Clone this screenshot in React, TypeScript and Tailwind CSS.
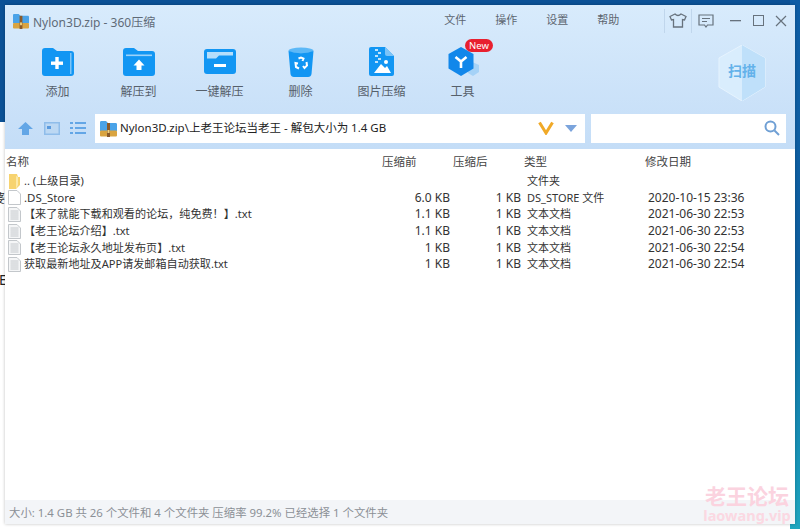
const font = "[font-family:'Noto_Sans','Noto_Sans_CJK_SC',sans-serif]";

const rows = [
  { name: ".. (上级目录)", before: "", after: "", type: "文件夹", date: "", icon: "folder" },
  { name: ".DS_Store", before: "6.0 KB", after: "1 KB", type: "DS_STORE 文件", date: "2020-10-15 23:36", icon: "blank" },
  { name: "【来了就能下载和观看的论坛，纯免费！】.txt", before: "1.1 KB", after: "1 KB", type: "文本文档", date: "2021-06-30 22:53", icon: "text" },
  { name: "【老王论坛介绍】.txt", before: "1.1 KB", after: "1 KB", type: "文本文档", date: "2021-06-30 22:53", icon: "text" },
  { name: "【老王论坛永久地址发布页】.txt", before: "1 KB", after: "1 KB", type: "文本文档", date: "2021-06-30 22:54", icon: "text" },
  { name: "获取最新地址及APP请发邮箱自动获取.txt", before: "1 KB", after: "1 KB", type: "文本文档", date: "2021-06-30 22:54", icon: "text" },
];

function ZipIcon({ size }: { size: number }) {
  return (
    <svg width={size} height={size} viewBox="0 0 17 17" className="shrink-0">
      <path d="M0 2.5 C0 1.5 .5 1 1.5 1 H6 L8 3 H15.5 C16.5 3 17 3.5 17 4.5 V11 H0 Z" fill="#4aa3e8" />
      <rect x="0" y="10.5" width="17" height="6" rx="1" fill="#d9a441" />
      <rect x="7" y="3" width="3" height="14" fill="#8a5a2b" />
      <rect x="7.5" y="10" width="2" height="3" fill="#f1d27c" />
    </svg>
  );
}

function ToolIcon({ kind }: { kind: string }) {
  if (kind === "add")
    return (
      <svg width="32" height="28" viewBox="0 0 32 28">
        <path d="M0 3 Q0 0 3 0 H11 L15 3 H29 Q32 3 32 6 V25 Q32 28 29 28 H3 Q0 28 0 25 Z" fill="#1296f3" />
        <rect x="28" y="5" width="1.5" height="21" fill="#7cc4f8" />
        <rect x="9" y="13.5" width="12" height="3.4" fill="#fff" />
        <rect x="13.3" y="9" width="3.4" height="12" fill="#fff" />
      </svg>
    );
  if (kind === "to")
    return (
      <svg width="32" height="28" viewBox="0 0 32 28">
        <path d="M0 3 Q0 0 3 0 H11 L15 3 H29 Q32 3 32 6 V25 Q32 28 29 28 H3 Q0 28 0 25 Z" fill="#1296f3" />
        <rect x="3" y="6.5" width="26" height="1.6" fill="#9bd2fa" />
        <path d="M16 11.5 L21.5 17.5 H18.5 V22 H13.5 V17.5 H10.5 Z" fill="#fff" />
      </svg>
    );
  if (kind === "one")
    return (
      <svg width="32" height="25" viewBox="0 0 32 25">
        <rect width="32" height="25" rx="3" fill="#1296f3" />
        <path d="M3 3 H29 V6.5 H15 L12 9.5 H3 Z" fill="#b5defb" />
        <rect x="10" y="15" width="12" height="3" fill="#fff" />
      </svg>
    );
  if (kind === "trash")
    return (
      <svg width="26" height="30" viewBox="0 0 26 30">
        <ellipse cx="13" cy="3.5" rx="12.5" ry="3" fill="#5cb8f7" />
        <path d="M.5 4 Q13 8.5 25.5 4 L23.5 27 Q23 30 20 30 H6 Q3 30 2.500 27 Z" fill="#1296f3" />
        {/* recycle mark, three arrows chasing round */}
        <path d="M10.500 11.500 L13 10.500 L15.500 11.500 L14.500 14 M18.500 15 L19 18.500 L16.500 21 L15 19 M11 21.500 L8 20 L7.500 16 L10 16.500" fill="none" stroke="#fff" strokeWidth="2" />
      </svg>
    );
  if (kind === "image")
    return (
      <svg width="25" height="29" viewBox="0 0 25 29">
        <path d="M2 0 H16 L25 9 V27 Q25 29 23 29 H2 Q0 29 0 27 V2 Q0 0 2 0 Z" fill="#1296f3" />
        <path d="M16 0 L25 9 H18 Q16 9 16 7 Z" fill="#7cc4f8" />
        <path d="M6 2h3v2h-3zM9 5h3v2h-3zM6 8h3v2h-3zM9 11h3v2h-3zM6 14h3v2h-3z" fill="#bfe2fb" />
        <path d="M5 26 L12 17 L16 21 L18 19 L22 26 Z" fill="#fff" />
        <circle cx="17" cy="15" r="2" fill="#fff" />
      </svg>
    );
  return (
    <svg width="32" height="30" viewBox="0 0 32 30" className="ml-[3px]">
      <path d="M22 14 L31 18 V25 L25 29 L20 26 Z" fill="#a5d2f7" />
      <path d="M13 0 L25.500 7 V21.500 L13 29 L.5 21.500 V7 Z" fill="#1287ea" />
      <path d="M7.500 10 L13 14.500 L18.500 10 M13 14.500 V21" fill="none" stroke="#fff" strokeWidth="2.600" />
    </svg>
  );
}

const tools = [
  { kind: "add", label: "添加" },
  { kind: "to", label: "解压到" },
  { kind: "one", label: "一键解压" },
  { kind: "trash", label: "删除" },
  { kind: "image", label: "图片压缩" },
  { kind: "tool", label: "工具" },
];

function FileIcon({ kind }: { kind: string }) {
  if (kind === "folder")
    return (
      <svg width="11" height="15" viewBox="0 0 11 15" className="ml-[4px] mr-[6px] shrink-0">
        <path d="M0 0 H8 L9 3 H11 V11 L7 15 H0 Z" fill="#f7d36f" />
        <path d="M7 2 L9 3 V11 L7 15 Z" fill="#fce9a8" />
      </svg>
    );
  return (
    <svg width="13" height="15" viewBox="0 0 13 15" className="ml-[3px] mr-[5px] shrink-0">
      <path d="M.5 .5 H9 L12.500 4 V14.500 H.5 Z" fill={kind === "blank" ? "#fff" : "#f5f6f7"} stroke="#c3c7cb" />
      {kind === "text" && <path d="M2.500 4h8M2.500 6h8M2.500 8h8M2.500 10h8M2.500 12h8" stroke="#c4c8cc" />}
    </svg>
  );
}

export default function App() {
  return (
    <div className={`relative h-[529px] w-[800px] overflow-hidden bg-white p-[5px] ${font}`}>
      {/* desktop behind the window */}
      <div className="absolute inset-x-0 top-0 h-[122px] bg-[#0b5196]" />
      <div className="absolute bottom-0 right-0 top-0 w-[10px] bg-gradient-to-b from-[#0d5da6] via-[#0f5f9e] to-[#1fa6bf]" />
      <div className="absolute left-0 top-[192px] w-[5px] overflow-hidden text-[12px] leading-[14px] text-[#333]">
        <span className="ml-[-7px]">婆</span>
      </div>
      <div className="absolute left-0 top-[272px] w-[5px] overflow-hidden text-[14px] leading-[16px] text-[#222]">
        <span className="ml-[-1px]">E</span>
      </div>

      <div className="relative flex h-[519px] w-[790px] flex-col bg-white shadow-[0_0_3px_rgba(0,0,0,0.25)]">
        <div className="flex h-[144px] flex-col bg-gradient-to-b from-[#d8ebfc] to-[#c4ddf7]">
          <div className="flex h-[32px] items-center text-[#5d6670]">
            <div className="ml-[8px] mr-[4px]">
              <ZipIcon size={16} />
            </div>
            <span className="mt-[4px] whitespace-nowrap text-[12px] text-[#5f6b78]">Nylon3D.zip - 360压缩</span>
            <div className="ml-[289px] flex w-[212px] shrink-0 items-center gap-[29px] pb-[1px] text-[11px]">
              <span>文件</span>
              <span>操作</span>
              <span>设置</span>
              <span>帮助</span>
            </div>
            <div className="ml-[8px] flex items-center pb-[1px]">
              <div className="flex h-[24px] w-[28px] items-center justify-center border-x border-[#c0d6ec]">
                <svg width="18" height="15" viewBox="0 0 18 15" fill="none" stroke="#67727d" strokeWidth="1.300">
                  <path d="M6 1 L1 3.500 L2.500 7 L4.500 6.500 V14 H13.500 V6.500 L15.500 7 L17 3.500 L12 1 Q9 4 6 1 Z" />
                </svg>
              </div>
              <div className="flex h-[24px] w-[27px] items-center justify-center">
                <svg width="16" height="14" viewBox="0 0 16 14" fill="none" stroke="#67727d" strokeWidth="1.200">
                  <path d="M1 1 H15 V11 H9.500 L8 13 L6.500 11 H1 Z" />
                  <path d="M4 4.500 H12 M4 7.500 H9" />
                </svg>
              </div>
              <svg width="12" height="2" viewBox="0 0 12 2" className="ml-[11px]">
                <rect width="11" height="1.300" fill="#67727d" />
              </svg>
              <div className="ml-[11px] h-[11px] w-[11px] border border-[#67727d]" />
              <svg width="12" height="12" viewBox="0 0 12 12" className="ml-[11px]" stroke="#67727d" strokeWidth="1.200">
                <path d="M1 1 L11 11 M11 1 L1 11" />
              </svg>
            </div>
          </div>

          <div className="relative flex h-[76px] pl-[12px] pt-[2px]">
            {tools.map((t) => (
              <div key={t.kind} className="relative flex w-[81px] flex-col items-center">
                <div className="flex h-[37px] items-center justify-center pt-[8px]">
                  <ToolIcon kind={t.kind} />
                </div>
                <span className="mt-[8px] text-[12px] leading-[16px] text-[#56606b]">{t.label}</span>
                {t.kind === "tool" && (
                  <span className="absolute left-[43px] top-[0px] rounded-full bg-[#e8202f] px-[4px] text-[9.500px] leading-[13px] text-white">
                    New
                  </span>
                )}
              </div>
            ))}
            {/* scan badge */}
            <div className="absolute left-[713px] top-[8px] h-[56px] w-[48px]">
              <svg width="48" height="56" viewBox="0 0 48 56">
                <path d="M24 0 L47 13 V42 L24 56 L1 42 V13 Z" fill="#d9edfd" stroke="#e6f3fe" strokeWidth="1" />
                <path d="M24 0 L47 13 V42 L24 56 Z" fill="#bfe0fa" />
              </svg>
              <span className="absolute inset-x-0 top-[16px] text-center text-[14px] font-bold leading-[20px] text-[#63b2ea]">
                扫描
              </span>
            </div>
          </div>

          <div className="flex h-[30px] items-center">
            <div className="flex w-[90px] items-center pl-[13px]">
              <svg width="15" height="15" viewBox="0 0 15 15">
                <path d="M7.500 1 L15 8 H11 V14 H4 V8 H0 Z" fill="#63a6e6" />
              </svg>
              <svg width="16" height="13" viewBox="0 0 16 13" className="ml-[11px]">
                <rect width="16" height="13" fill="#8fbdea" />
                <rect x="1.500" y="1.500" width="13" height="10" fill="#bcd8f3" />
                <rect x="3" y="4" width="4" height="3" fill="#5a9ade" />
              </svg>
              <svg width="16" height="12" viewBox="0 0 16 12" className="ml-[10px]">
                <path d="M0 0h3v2H0zM0 5h3v2H0zM0 10h3v2H0zM5 0h11v2H5zM5 5h11v2H5zM5 10h11v2H5z" fill="#63a6e6" />
              </svg>
            </div>
            <div className="flex h-[29px] w-[490px] items-center bg-white pl-[5px] pr-[8px]">
              <ZipIcon size={17} />
              <span className="ml-[3px] whitespace-nowrap text-[11.500px] text-[#222]">Nylon3D.zip\上老王论坛当老王 - 解包大小为 1.4 GB</span>
              <svg width="16" height="14" viewBox="0 0 16 14" className="ml-auto" fill="none">
                <path d="M1.500 1.500 L8 12 L14.500 1.500" stroke="#f0a928" strokeWidth="3" />
              </svg>
              <svg width="12" height="7" viewBox="0 0 12 7" className="ml-[11px]">
                <path d="M0 0 H12 L6 7 Z" fill="#7ba4dc" />
              </svg>
            </div>
            <div className="ml-[6px] flex h-[29px] w-[195px] items-center justify-end bg-white pr-[6px]">
              <svg width="16" height="16" viewBox="0 0 16 16" fill="none" stroke="#6f9fd4" strokeWidth="2">
                <circle cx="6.500" cy="6.500" r="5" />
                <path d="M10.500 10.500 L15 15" />
              </svg>
            </div>
          </div>
          <div className="flex-1" />
        </div>

        <div className="flex-1 bg-white text-[12px] text-[#333]">
          <div className="flex h-[24px] items-center pt-[2px] text-[11.500px] text-[#444]">
            <span className="ml-[1px] w-[376px]">名称</span>
            <span className="w-[71px]">压缩前</span>
            <span className="w-[71px]">压缩后</span>
            <span className="w-[121px]">类型</span>
            <span>修改日期</span>
          </div>
          <div>
            {rows.map((r) => (
              <div key={r.name} className="flex h-[16.600px] items-center leading-[16px]">
                <div className="flex w-[369px] items-center">
                  <FileIcon kind={r.icon} />
                  <span className={r.icon === "blank" ? "-ml-[2px] whitespace-nowrap text-[11.500px]" : "-ml-[2px] whitespace-nowrap text-[11.100px]"}>
                    {r.name}
                  </span>
                </div>
                <span className="w-[76px] text-right">{r.before}</span>
                <span className="w-[71px] text-right">{r.after}</span>
                <span className="ml-[6px] w-[121px] whitespace-nowrap text-[11px]">{r.type}</span>
                <span>{r.date}</span>
              </div>
            ))}
          </div>
        </div>

        <div className="flex h-[24px] items-center bg-[#f3f5f8] pl-[4px] pt-[1px] text-[11.400px] text-[#8b9096]">
          大小: 1.4 GB 共 26 个文件和 4 个文件夹 压缩率 99.2% 已经选择 1 个文件夹
        </div>
      </div>

      {/* watermark */}
      <div className="pointer-events-none absolute right-[10px] top-[486px] flex w-[86px] flex-col items-center">
        <span className="text-[21px] font-bold leading-[20px] text-[#fbd3df]">老王论坛</span>
        <span className="mt-[2px] text-[14.500px] font-bold leading-[15px] text-[#fbd8e2]">laowang.vip</span>
      </div>
    </div>
  );
}
